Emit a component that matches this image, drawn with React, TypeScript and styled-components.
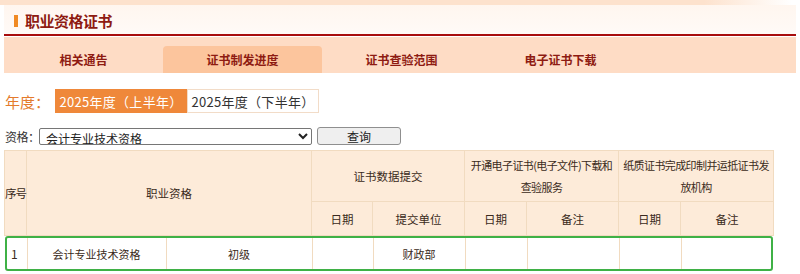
import styled, { createGlobalStyle } from "styled-components";

const GlobalStyle = createGlobalStyle`
  body {
    margin: 0;
    background: #fff;
    font-family: "Noto Sans CJK SC", "Noto Sans", sans-serif;
  }
`;

const Page = styled.div`
  width: 800px;
  height: 274px;
  overflow: hidden;
`;

const TopStrip = styled.div`
  height: 5px;
  background: linear-gradient(to right, #fde2cd 0%, #fde2cd 88%, #fff 99%);
`;

const TitleBar = styled.div`
  margin: 0 4px;
  height: 29px;
  display: flex;
  align-items: center;
  gap: 7px;
  padding-left: 10px;
  background: linear-gradient(to bottom, #fff6ef, #fffaf7);
  border-bottom: 2px solid #a80d0d;
`;

const TitleMark = styled.span`
  width: 4px;
  height: 12px;
  margin-top: 2px;
  background: #f08a24;
`;

const TitleText = styled.h1`
  margin: 2px 0 0;
  font-size: 15px;
  font-weight: 700;
  color: #8e1b12;
  letter-spacing: -0.5px;
`;

const TabBar = styled.div`
  margin: 1px 4px 0;
  height: 36px;
  display: flex;
  align-items: flex-end;
  background: #fedcc5;
`;

const Tab = styled.div<{ $active?: boolean }>`
  width: 159px;
  height: 27px;
  display: flex;
  align-items: center;
  justify-content: center;
  font-size: 12px;
  font-weight: 700;
  color: #8e1b12;
  border-radius: 4px 4px 0 0;
  background: ${(p) => (p.$active ? "#fcc59d" : "transparent")};
`;

const YearRow = styled.div`
  margin: 16px 0 0 5px;
  display: flex;
  align-items: center;
`;

const YearLabel = styled.span`
  width: 50px;
  font-size: 15px;
  color: #e47b2c;
`;

const YearBtn = styled.div<{ $active?: boolean }>`
  width: 132px;
  height: 24px;
  box-sizing: border-box;
  display: flex;
  align-items: center;
  justify-content: center;
  font-size: 13px;
  letter-spacing: 0.3px;
  color: ${(p) => (p.$active ? "#fff" : "#333")};
  background: ${(p) => (p.$active ? "#ef883a" : "#fff")};
  border: 1px solid ${(p) => (p.$active ? "#ef883a" : "#f2dcc8")};
`;

const QueryRow = styled.div`
  margin: 14px 0 0 5px;
  display: flex;
  align-items: center;
  height: 18px;
`;

const QueryLabel = styled.span`
  width: 34px;
  font-size: 12px;
  white-space: nowrap;
  letter-spacing: -0.5px;
  color: #333;
`;

const Select = styled.select`
  width: 273px;
  height: 17px;
  font-family: inherit;
  font-size: 12px;
  padding: 0 2px;
  border: 1px solid #767676;
  border-radius: 2px;
  background: #fff;
  color: #222;
`;

const Button = styled.button`
  margin-left: 5px;
  width: 84px;
  height: 18px;
  font-family: inherit;
  font-size: 12px;
  padding: 0;
  border: 1px solid #8f8f8f;
  border-radius: 3px;
  background: #efefef;
  color: #222;
`;

const TableWrap = styled.div`
  margin: 5px 0 0 4px;
  width: 769px;
`;

const Table = styled.table<{ $w?: number }>`
  width: ${(p) => p.$w ?? 769}px;
  border-collapse: collapse;
  table-layout: fixed;
  font-size: 11px;
  color: #3a2a20;
`;

const Th = styled.th<{ $h?: number; $tight?: boolean }>`
  height: ${(p) => p.$h ?? 33}px;
  padding: 0 2px;
  font-weight: 400;
  font-size: ${(p) => (p.$tight ? "11px" : "11.5px")};
  letter-spacing: ${(p) => (p.$tight ? "-0.6px" : "0")};
  white-space: nowrap;
  line-height: 22px;
  background: #fdebd9;
  border: 1px solid #f1dbc0;
`;

const Highlight = styled.div`
  margin-left: 1px;
  width: 764px;
  border: 2px solid #3fb146;
  border-radius: 3px;
  overflow: hidden;
`;

const Td = styled.td<{ $left?: boolean }>`
  height: 31px;
  padding: 0 4px;
  text-align: ${(p) => (p.$left ? "left" : "center")};
  font-size: ${(p) => (p.$left ? "12px" : "11px")};
  border-left: 1px solid #f1dbc0;
  &:first-child {
    border-left: none;
  }
`;

const headWidths = [22, 139, 146, 61, 92, 62, 92, 62, 93];
const bodyWidths = [20, 139, 146, 61, 92, 62, 92, 62, 90];

const Cols = ({ widths }: { widths: number[] }) => (
  <colgroup>
    {widths.map((w, i) => (
      <col key={i} style={{ width: w }} />
    ))}
  </colgroup>
);

export default function App() {
  return (
    <Page>
      <GlobalStyle />
      <TopStrip />
      <TitleBar>
        <TitleMark />
        <TitleText>职业资格证书</TitleText>
      </TitleBar>
      <TabBar>
        <Tab>相关通告</Tab>
        <Tab $active>证书制发进度</Tab>
        <Tab>证书查验范围</Tab>
        <Tab>电子证书下载</Tab>
      </TabBar>
      <YearRow>
        <YearLabel>年度：</YearLabel>
        <YearBtn $active>2025年度（上半年）</YearBtn>
        <YearBtn>2025年度（下半年）</YearBtn>
      </YearRow>
      <QueryRow>
        <QueryLabel>资格：</QueryLabel>
        <Select defaultValue="kj">
          <option value="kj">会计专业技术资格</option>
        </Select>
        <Button>查询</Button>
      </QueryRow>
      <TableWrap>
        <Table>
          <Cols widths={headWidths} />
          <thead>
            <tr>
              <Th rowSpan={2} style={{ padding: 0, letterSpacing: "-1px" }}>序号</Th>
              <Th colSpan={2} rowSpan={2}>职业资格</Th>
              <Th colSpan={2} $h={50}>证书数据提交</Th>
              <Th colSpan={2} $h={50} $tight>
                开通电子证书(电子文件)下载和
                <br />
                查验服务
              </Th>
              <Th colSpan={2} $h={50} $tight>
                纸质证书完成印制并运抵证书发
                <br />
                放机构
              </Th>
            </tr>
            <tr>
              <Th>日期</Th>
              <Th>提交单位</Th>
              <Th>日期</Th>
              <Th>备注</Th>
              <Th>日期</Th>
              <Th>备注</Th>
            </tr>
          </thead>
        </Table>
        <Highlight>
          <Table $w={764}>
            <Cols widths={bodyWidths} />
            <tbody>
              <tr>
                <Td $left>1</Td>
                <Td>会计专业技术资格</Td>
                <Td>初级</Td>
                <Td />
                <Td>财政部</Td>
                <Td />
                <Td />
                <Td />
                <Td />
              </tr>
            </tbody>
          </Table>
        </Highlight>
      </TableWrap>
    </Page>
  );
}
